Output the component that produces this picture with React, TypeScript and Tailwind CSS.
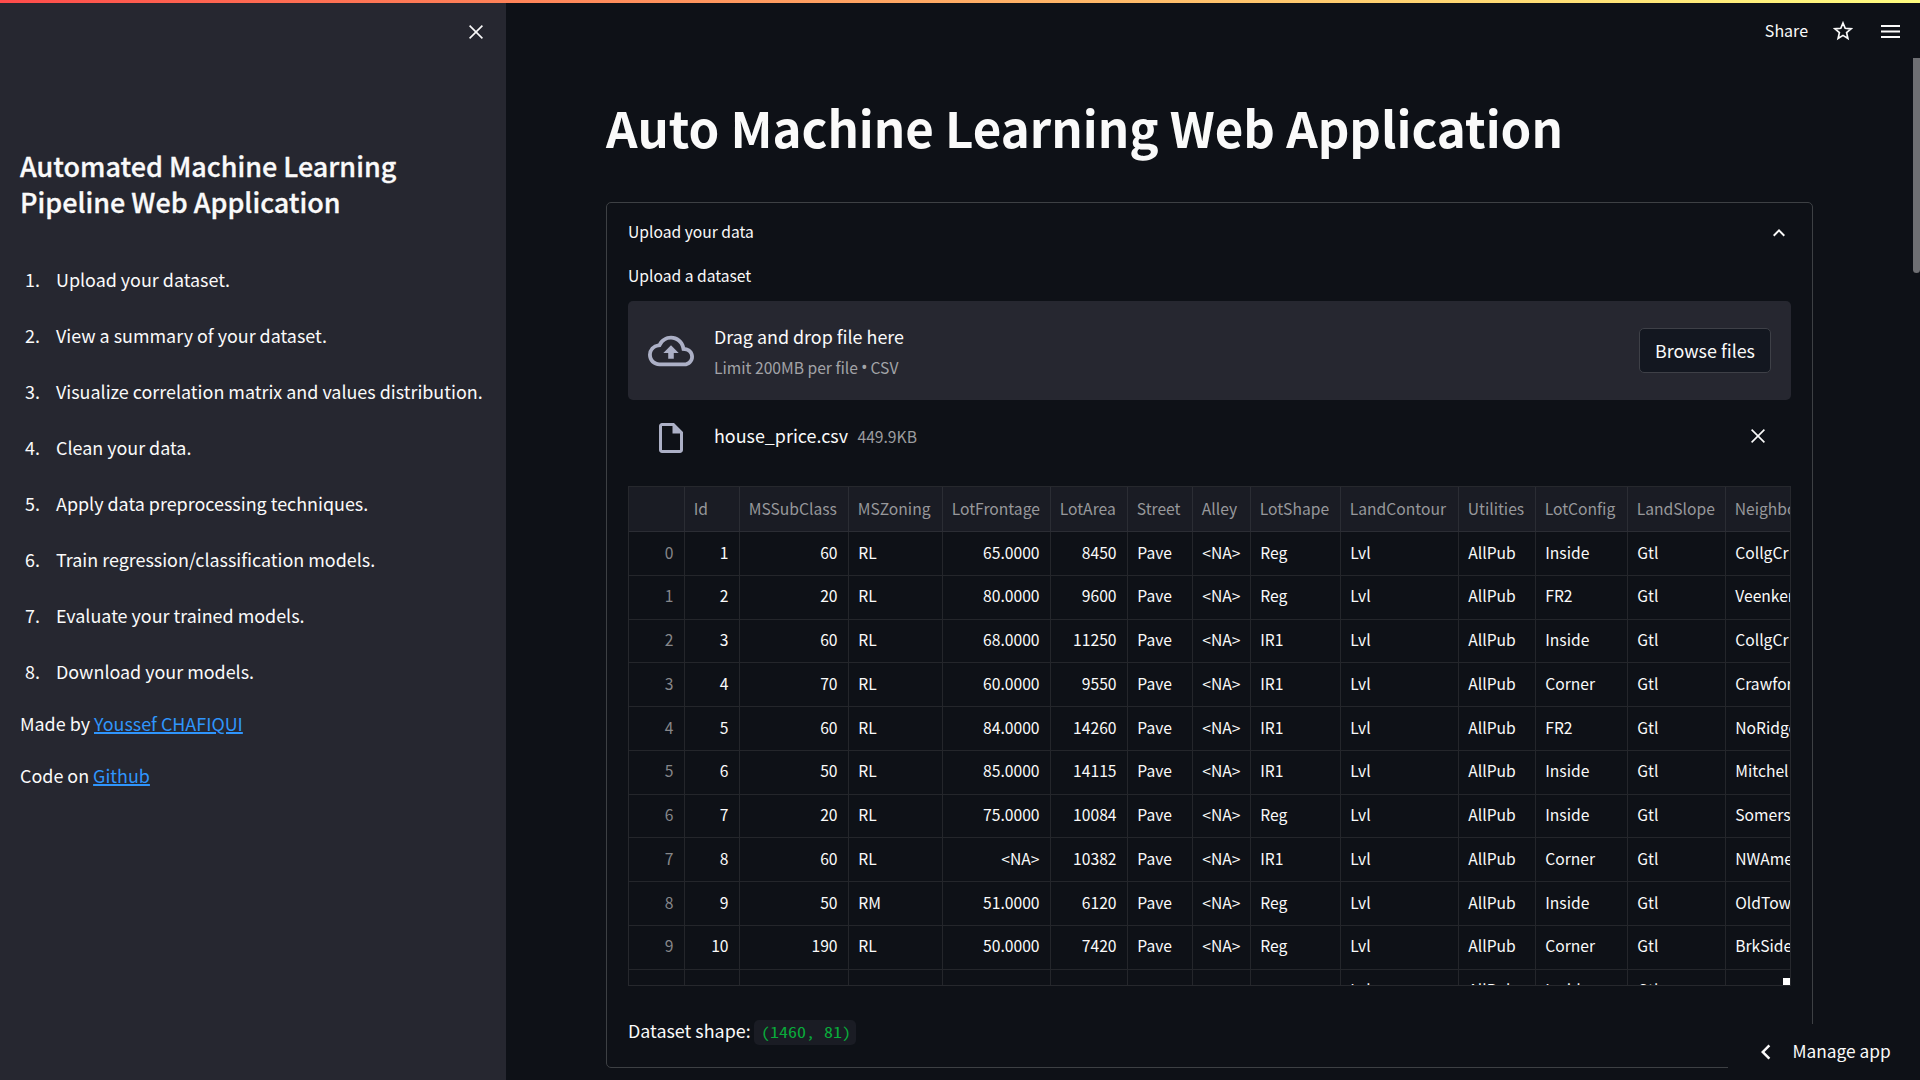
import {
  MdChevronLeft,
  MdExpandLess,
  MdOutlineCloudUpload,
  MdOutlineInsertDriveFile,
} from "react-icons/md";

const steps = [
  "Upload your dataset.",
  "View a summary of your dataset.",
  "Visualize correlation matrix and values distribution.",
  "Clean your data.",
  "Apply data preprocessing techniques.",
  "Train regression/classification models.",
  "Evaluate your trained models.",
  "Download your models.",
];

const columns = [
  "",
  "Id",
  "MSSubClass",
  "MSZoning",
  "LotFrontage",
  "LotArea",
  "Street",
  "Alley",
  "LotShape",
  "LandContour",
  "Utilities",
  "LotConfig",
  "LandSlope",
  "Neighborhood",
];

const numeric = new Set([0, 1, 2, 4, 5]);

const rows = [
  ["0", "1", "60", "RL", "65.0000", "8450", "Pave", "<NA>", "Reg", "Lvl", "AllPub", "Inside", "Gtl", "CollgCr"],
  ["1", "2", "20", "RL", "80.0000", "9600", "Pave", "<NA>", "Reg", "Lvl", "AllPub", "FR2", "Gtl", "Veenker"],
  ["2", "3", "60", "RL", "68.0000", "11250", "Pave", "<NA>", "IR1", "Lvl", "AllPub", "Inside", "Gtl", "CollgCr"],
  ["3", "4", "70", "RL", "60.0000", "9550", "Pave", "<NA>", "IR1", "Lvl", "AllPub", "Corner", "Gtl", "Crawfor"],
  ["4", "5", "60", "RL", "84.0000", "14260", "Pave", "<NA>", "IR1", "Lvl", "AllPub", "FR2", "Gtl", "NoRidge"],
  ["5", "6", "50", "RL", "85.0000", "14115", "Pave", "<NA>", "IR1", "Lvl", "AllPub", "Inside", "Gtl", "Mitchel"],
  ["6", "7", "20", "RL", "75.0000", "10084", "Pave", "<NA>", "Reg", "Lvl", "AllPub", "Inside", "Gtl", "Somerst"],
  ["7", "8", "60", "RL", "<NA>", "10382", "Pave", "<NA>", "IR1", "Lvl", "AllPub", "Corner", "Gtl", "NWAmes"],
  ["8", "9", "50", "RM", "51.0000", "6120", "Pave", "<NA>", "Reg", "Lvl", "AllPub", "Inside", "Gtl", "OldTown"],
  ["9", "10", "190", "RL", "50.0000", "7420", "Pave", "<NA>", "Reg", "Lvl", "AllPub", "Corner", "Gtl", "BrkSide"],
  ["", "", "", "", "", "", "", "", "", "Lvl", "AllPub", "Inside", "Gtl", ""],
];

const gridColumns =
  "grid grid-cols-[56px_55px_109px_94px_108px_77px_65px_58px_90px_118px_77px_92px_98px_130px]";

function CloseIcon({ className }: { className?: string }) {
  return (
    <svg viewBox="0 0 14 14" className={className} fill="none" stroke="currentColor" strokeWidth="1.6">
      <path d="M0.6 0.6L13.4 13.4M13.4 0.6L0.6 13.4" />
    </svg>
  );
}

function Sidebar() {
  return (
    <aside className="flex w-[506px] shrink-0 flex-col bg-[#262730]">
      <div className="flex h-[148px] shrink-0 justify-end pt-[25.4px] pr-[22.6px]">
        <CloseIcon className="h-[14px] w-[14px]" />
      </div>
      <div className="px-5">
        <h2 className="text-[26.95px] leading-[36px] font-medium whitespace-nowrap [-webkit-text-stroke:0.3px]">
          Automated Machine Learning
          <br />
          Pipeline Web Application
        </h2>
        <ol className="mt-[31px] text-[17.92px] leading-[56px]">
          {steps.map((step, i) => (
            <li key={step} className="flex whitespace-nowrap">
              <span className="w-[20px] text-right">{i + 1}.</span>
              <span className="ml-[16px]">{step}</span>
            </li>
          ))}
        </ol>
        <p className="mt-2 text-[17.92px] leading-8">
          Made by <a className="text-[#2f95fc] underline decoration-2 underline-offset-[1px]">Youssef CHAFIQUI</a>
        </p>
        <p className="mt-5 text-[17.92px] leading-8">
          Code on <a className="text-[#2f95fc] underline decoration-2 underline-offset-[1px]">Github</a>
        </p>
      </div>
    </aside>
  );
}

function DataTable() {
  return (
    <div className="relative mt-[15px] h-[500px] w-[1163px] overflow-hidden border border-[#26282d] text-[15.65px]">
      <div className={`${gridColumns} h-[45px] bg-[#1a1c24]`}>
        {columns.map((name, i) => (
          <div
            key={i}
            className="flex items-center border-r border-b border-[#2b2d34] pl-[8.75px] leading-none whitespace-nowrap text-[#97989b]"
          >
            {name}
          </div>
        ))}
      </div>
      {rows.map((row, r) => (
        <div key={r} className={`${gridColumns} h-[43.75px]`}>
          {row.map((value, i) => (
            <div
              key={i}
              className={`flex items-center border-r border-b border-[#24262b] pr-[10.5px] pb-[1.75px] pl-[9.25px] leading-none whitespace-nowrap ${
                numeric.has(i) ? "justify-end" : ""
              } ${i === 0 ? "text-[#86878a]" : ""}`}
            >
              {value}
            </div>
          ))}
        </div>
      ))}
      <div className="absolute right-0 bottom-0 h-[7px] w-[7px] bg-white" />
    </div>
  );
}

function UploadPanel() {
  return (
    <section className="mt-[42px] h-[866px] w-[1207px] rounded-[5px] border border-[#3d4044] px-[21px]">
      <div className="flex h-[57px] items-center justify-between text-[15.65px]">
        <span>Upload your data</span>
        <MdExpandLess className="mt-[2px] mr-[0.5px] h-6 w-6" />
      </div>
      <div className="text-[15.65px] leading-[31px]">Upload a dataset</div>
      <div className="mt-[10px] flex h-[99px] w-[1163px] items-center rounded-[5px] bg-[#262730] px-5">
        <MdOutlineCloudUpload className="h-[46px] w-[46px] text-[#acb0c6]" />
        <div className="ml-[20px] flex flex-col pt-[2px]">
          <span className="text-[17.9px] leading-[31px]">Drag and drop file here</span>
          <span className="flex text-[15.65px] leading-[31px] text-[#a2a3a7]">
            Limit 200MB per file
            <span className="mx-[3px] text-[17.5px] [font-family:'Open_Sans',sans-serif]">•</span>
            CSV
          </span>
        </div>
        <button className="ml-auto h-[45px] w-[132px] rounded-[5px] border border-[#3e4047] bg-[#131720] text-[17.9px]">
          Browse files
        </button>
      </div>
      <div className="flex h-[71px] w-[1163px] items-center pr-[25.6px] pl-[25px]">
        <MdOutlineInsertDriveFile className="mt-[5px] h-9 w-9 text-[#acb0c6]" />
        <span className="ml-[25px] text-[17.9px]">house_price.csv</span>
        <span className="mt-[2px] ml-[9.5px] text-[15.65px] text-[#9b9c9f]">449.9KB</span>
        <CloseIcon className="ml-auto h-[14px] w-[14px]" />
      </div>
      <DataTable />
      <div className="mt-[29px] flex h-[30px] items-center text-[17.9px]">
        <span>Dataset shape:</span>
        <span className="mt-[5px] ml-[3px] flex h-[25px] w-[102px] items-center rounded-[5px] bg-[#1a1c24] pl-[7px]">
          <code className="origin-left scale-x-[1.25] text-[14.4px] leading-none whitespace-pre text-[#09ab3b] [font-family:'Noto_Sans_Mono_CJK_SC',monospace]">
            (1460, 81)
          </code>
        </span>
      </div>
    </section>
  );
}

export default function App() {
  return (
    <div className="relative flex h-[1080px] w-[1920px] overflow-hidden bg-[#0e1117] text-[#fafafa] [font-family:'Noto_Sans_CJK_SC',sans-serif]">
      <Sidebar />
      <main className="flex-1 pt-[94px] pl-[100px]">
        <h1 className="text-[49.2px] leading-[66px] font-bold whitespace-nowrap">
          Auto Machine Learning Web Application
        </h1>
        <UploadPanel />
      </main>

      <div className="absolute inset-x-0 top-0 h-[3px] bg-linear-to-r from-[#ff4b4b] to-[#fffd80]" />

      <header className="absolute top-[3px] right-[20px] flex h-[56px] items-center">
        <span className="pb-[2px] text-[16px]">Share</span>
        <svg viewBox="0 0 20 20" className="ml-[25px] h-5 w-5" fill="none" stroke="currentColor" strokeWidth="1.7">
          <path d="M10 2L12.2 7.3L18 7.8L13.6 11.6L14.9 17.5L10 14.4L5.1 17.5L6.4 11.6L2 7.8L7.8 7.3Z" />
        </svg>
        <svg viewBox="0 0 19 13" className="ml-[28px] h-[13px] w-[19px]" fill="currentColor">
          <path d="M0 0h19v2H0zM0 5.5h19v2H0zM0 11h19v2H0z" />
        </svg>
      </header>

      <div className="absolute top-[58px] right-0 h-[215px] w-[7px] rounded-b-[4px] bg-[#6e6f73]" />

      <div className="absolute right-0 bottom-0 flex h-[56px] w-[192px] items-center bg-[#0e1117] pl-[22.5px]">
        <MdChevronLeft className="-mt-[1px] h-[30px] w-[30px]" />
        <span className="-mt-[2px] ml-[12px] text-[17.3px]">Manage app</span>
      </div>
    </div>
  );
}
